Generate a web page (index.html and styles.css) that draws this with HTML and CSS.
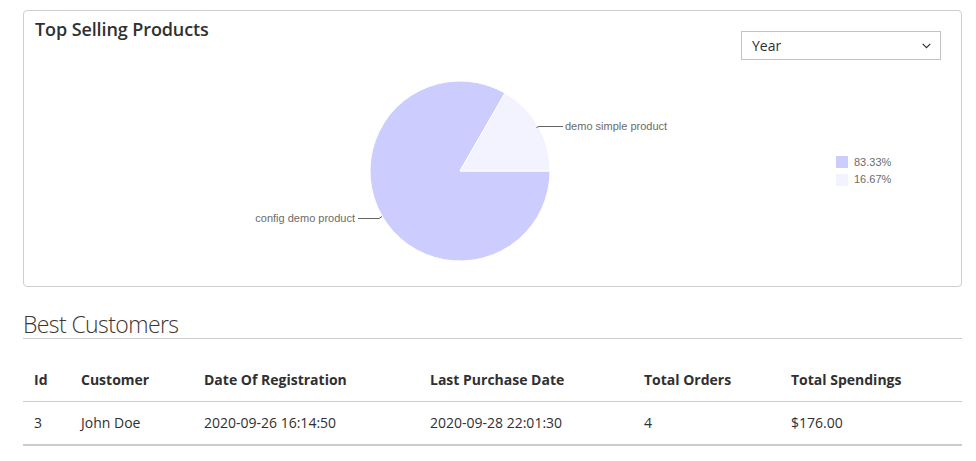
FILE: index.html
```html
<!DOCTYPE html>
<html lang="en">
<head>
<meta charset="utf-8">
<title>Dashboard</title>
<link rel="stylesheet" href="styles.css">
</head>
<body>
<div class="page">
  <section class="card">
    <div class="card-head">
      <h3 class="card-title">Top Selling Products</h3>
      <div class="select">
        <span>Year</span>
        <svg class="chev" width="9" height="6" viewBox="0 0 9 6"><path d="M0.7 0.8 L4.5 4.6 L8.3 0.8" fill="none" stroke="#303030" stroke-width="1.2"/></svg>
      </div>
    </div>
    <svg class="chart" width="937" height="226" viewBox="0 0 937 226">
      <path d="M436 111 L526 111 A90 90 0 1 1 481 33.06 Z" fill="#ccccff" stroke="#ffffff" stroke-width="1"/>
      <path d="M436 111 L481 33.06 A90 90 0 0 1 526 111 Z" fill="#f3f3ff" stroke="#ffffff" stroke-width="1"/>
      <path d="M512.5 67.5 L515 66.5 L539 66.5" fill="none" stroke="#636363" stroke-width="1"/>
      <text x="541" y="70" class="lbl">demo simple product</text>
      <path d="M334 158.5 L355 158.5 L358 156.5" fill="none" stroke="#636363" stroke-width="1"/>
      <text x="331" y="162" class="lbl" text-anchor="end">config demo product</text>
      <rect x="812" y="96" width="12" height="12" fill="#ccccff"/>
      <text x="830" y="106" class="lbl">83.33%</text>
      <rect x="812" y="114" width="12" height="12" fill="#f3f3ff"/>
      <text x="830" y="123" class="lbl">16.67%</text>
    </svg>
  </section>

  <h2 class="section-title">Best Customers</h2>
  <table class="grid">
    <thead>
      <tr>
        <th class="c-id">Id</th>
        <th class="c-cust">Customer</th>
        <th class="c-reg">Date Of Registration</th>
        <th class="c-last">Last Purchase Date</th>
        <th class="c-orders">Total Orders</th>
        <th class="c-spend">Total Spendings</th>
      </tr>
    </thead>
    <tbody>
      <tr>
        <td>3</td>
        <td>John Doe</td>
        <td>2020-09-26 16:14:50</td>
        <td>2020-09-28 22:01:30</td>
        <td>4</td>
        <td>$176.00</td>
      </tr>
    </tbody>
  </table>
</div>
</body>
</html>
```
FILE: styles.css
```css
html, body {
  margin: 0;
  padding: 0;
  background: #ffffff;
}
body {
  font-family: "Open Sans", "Noto Sans", sans-serif;
  color: #303030;
}
.page {
  padding: 10px 14px 0 23px;
}
.card {
  border: 1px solid #cfcfcf;
  border-radius: 4px;
  display: flex;
  flex-direction: column;
}
.card-head {
  display: flex;
  justify-content: space-between;
  align-items: flex-start;
  padding-left: 11px;
  padding-right: 20px;
}
.card-title {
  margin: 6px 0 0 0;
  font-size: 18px;
  line-height: 24px;
  font-weight: 600;
  letter-spacing: -0.1px;
  color: #303030;
}
.select {
  margin-top: 20px;
  width: 200px;
  height: 29px;
  box-sizing: border-box;
  border: 1px solid #c2c2c2;
  display: flex;
  align-items: center;
  justify-content: space-between;
  padding: 0 9px 0 10px;
  font-size: 14px;
  color: #303030;
}
.chev {
  display: block;
}
.chart {
  display: block;
}
.lbl {
  font-family: "Liberation Sans", Arial, sans-serif;
  font-size: 11px;
  fill: #6b6b6b;
}
.section-title {
  margin: 23px 0 0 0;
  font-size: 23px;
  line-height: 28px;
  font-weight: 300;
  letter-spacing: -0.6px;
  color: #41362f;
  border-bottom: 1px solid #cccccc;
}
.grid {
  margin-top: 21px;
  width: 100%;
  border-collapse: collapse;
  table-layout: fixed;
  font-size: 14px;
  line-height: 20px;
}
.grid th {
  text-align: left;
  font-weight: 700;
  padding: 10px 11px 11px 11px;
  border-bottom: 1px solid #cccccc;
  color: #303030;
  white-space: nowrap;
}
.grid td {
  padding: 11px 11px;
  border-bottom: 2px solid #cccccc;
  color: #303030;
  white-space: nowrap;
}
.c-id { width: 25px; }
.c-cust { width: 101px; }
.c-reg { width: 204px; }
.c-last { width: 192px; }
.c-orders { width: 125px; }
.c-spend { width: auto; }
```
